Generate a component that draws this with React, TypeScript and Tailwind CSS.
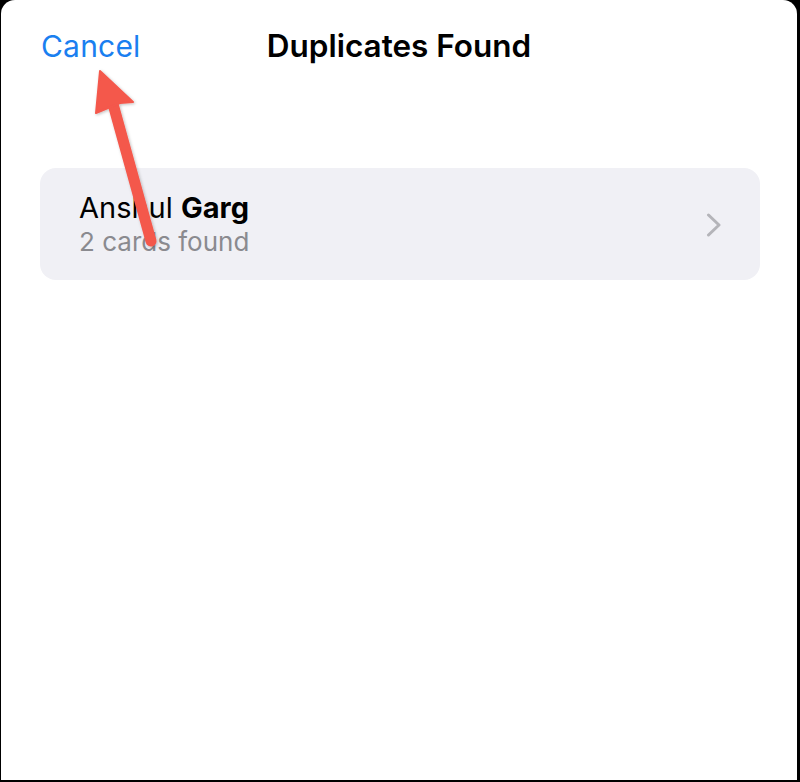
import React from "react";

export default function App() {
  return (
    <div className="w-[800px] h-[782px] bg-black pl-px pr-[3px] pb-[2px] overflow-hidden">
      <div
        className="relative w-full h-full bg-white rounded-t-[14px] pl-[39px] pr-[37px] pt-[26px]"
        style={{ fontFamily: 'Inter, "Liberation Sans", sans-serif' }}
      >
        <div className="relative flex items-center h-[40px]">
          <span className="text-[#1a7ff0] text-[30px] leading-none tracking-[0.2px] ml-px">Cancel</span>
          <span className="absolute -left-[39px] -right-[37px] text-center text-black text-[31.5px] font-semibold leading-none pointer-events-none">
            Duplicates Found
          </span>
        </div>
        <div className="mt-[102px] h-[112px] rounded-[16px] bg-[#f0f0f5] flex items-center pl-[39px] pr-[38px]">
          <div className="flex-1 flex flex-col gap-[3px]">
            <div className="text-[29px] leading-[32px] text-black">
              Anshul <span className="font-bold">Garg</span>
            </div>
            <div className="text-[26px] leading-[30px] text-[#8a8a8f]">2 cards found</div>
          </div>
          <svg width="16" height="24" viewBox="0 0 16 24" className="mt-[1px]">
            <path d="M2.5 2 L13 12 L2.5 22" fill="none" stroke="#b4b4b9" strokeWidth="3" strokeLinecap="round" strokeLinejoin="round" />
          </svg>
        </div>
        <svg className="absolute left-0 top-0 pointer-events-none" width="200" height="260" viewBox="0 0 200 260">
          <defs>
            <filter id="sh" x="-20%" y="-20%" width="140%" height="140%">
              <feDropShadow dx="1" dy="1" stdDeviation="1.5" floodColor="#000" floodOpacity="0.25" />
            </filter>
          </defs>
          <g filter="url(#sh)">
            <path d="M112 104 L150 241" stroke="#f4584c" strokeWidth="11" strokeLinecap="round" fill="none" />
            <path d="M99 71 L132 102 L119 103 L95 113 Z" fill="#f4584c" stroke="#f4584c" strokeWidth="2" strokeLinejoin="round" />
          </g>
        </svg>
      </div>
    </div>
  );
}
